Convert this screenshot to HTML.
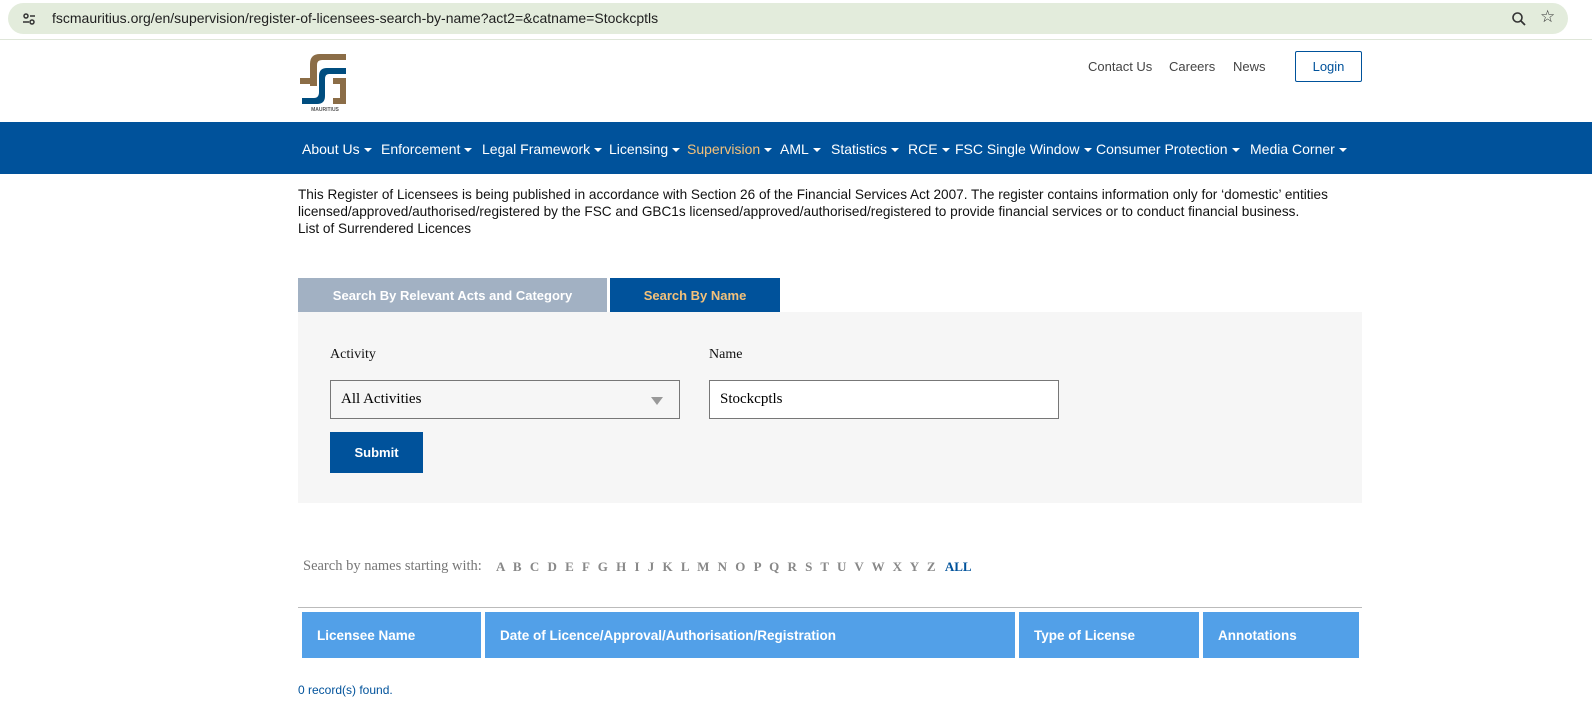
<!DOCTYPE html>
<html><head><meta charset="utf-8"><style>
*{margin:0;padding:0;box-sizing:border-box}
body{width:1592px;height:728px;overflow:hidden;background:#fff;font-family:"Liberation Sans",sans-serif;position:relative}
.a{position:absolute}
.bar{left:0;top:0;width:1592px;height:40px;background:#fff;border-bottom:1px solid #dfe6d9}
.url{left:8px;top:3px;width:1560px;height:31px;background:#e3ecdc;border-radius:16px}
.url span{position:absolute;left:44px;top:7px;font-size:14px;color:#1f1f1f}
.nav{left:0;top:122px;width:1592px;height:52px;background:#00529b}
.nav div{position:absolute;top:19px;color:#fff;font-size:14px;white-space:nowrap}
.tri{display:inline-block;border-left:4px solid transparent;border-right:4px solid transparent;border-top:4px solid #fff;margin-left:4px;vertical-align:2px}
.toplink{top:59px;font-size:13px;color:#444}
.p{left:298px;font-size:13.6px;color:#111;line-height:17px;white-space:nowrap}
.serif{font-family:"Liberation Serif",serif}
.th{top:612px;height:46px;background:#52a0e8;color:#fff;font-weight:bold;font-size:13.5px;padding:16px 0 0 15px}
</style></head><body>
<div class="a bar"></div>
<div class="a url"><span>fscmauritius.org/en/supervision/register-of-licensees-search-by-name?act2=&amp;catname=Stockcptls</span>
<svg class="a" style="left:14px;top:9px" width="14" height="14" viewBox="0 0 14 14"><circle cx="4" cy="4" r="2" fill="none" stroke="#333" stroke-width="1.5"/><line x1="8" y1="4" x2="13" y2="4" stroke="#333" stroke-width="1.5"/><line x1="1" y1="10" x2="7" y2="10" stroke="#333" stroke-width="1.5"/><circle cx="10" cy="10" r="2" fill="none" stroke="#333" stroke-width="1.5"/></svg>
<svg class="a" style="left:1503px;top:8px" width="16" height="16" viewBox="0 0 16 16"><circle cx="6.5" cy="6.5" r="4.5" fill="none" stroke="#333" stroke-width="1.6"/><line x1="10" y1="10" x2="14" y2="14" stroke="#333" stroke-width="1.8"/></svg>
<div class="a" style="left:1532px;top:4px;font-size:17px;color:#333">☆</div>
</div>
<svg class="a" style="left:300px;top:52px" width="50" height="60" viewBox="0 0 50 60">
<path d="M10 34 V12 Q10 2 20 2 H46 V8 H22 Q17 8 17 13 V34 Z M0 26 H17 V32 H0 Z" fill="#8b6d47"/>
<path d="M2 46 H14 Q19 46 19 40 V24 Q19 16 27 16 H46 V22 H29 Q25 22 25 27 V44 Q25 52 17 52 H2 Z" fill="#004d7f"/>
<path d="M33 26 H46 V52 H33 V46 H40 V32 H33 Z" fill="#8b6d47"/>
<text x="25" y="59" font-size="5" font-weight="bold" fill="#555" text-anchor="middle" font-family="Liberation Sans">MAURITIUS</text>
</svg>
<div class="a toplink" style="left:1088px">Contact Us</div>
<div class="a toplink" style="left:1169px">Careers</div>
<div class="a toplink" style="left:1233px">News</div>
<div class="a" style="left:1295px;top:51px;width:67px;height:31px;border:1px solid #00529b;border-radius:2px;color:#00529b;font-size:13px;text-align:center;line-height:29px">Login</div>
<div class="a nav">
<div style="left:302px">About Us<i class="tri"></i></div>
<div style="left:381px">Enforcement<i class="tri"></i></div>
<div style="left:482px">Legal Framework<i class="tri"></i></div>
<div style="left:609px">Licensing<i class="tri"></i></div>
<div style="left:687px;color:#f3c17a">Supervision<i class="tri"></i></div>
<div style="left:780px">AML<i class="tri"></i></div>
<div style="left:831px">Statistics<i class="tri"></i></div>
<div style="left:908px">RCE<i class="tri"></i></div>
<div style="left:955px">FSC Single Window<i class="tri"></i></div>
<div style="left:1096px">Consumer Protection<i class="tri"></i></div>
<div style="left:1250px">Media Corner<i class="tri"></i></div>
</div>
<div class="a p" style="top:186px">This Register of Licensees is being published in accordance with Section 26 of the Financial Services Act 2007. The register contains information only for ‘domestic’ entities<br>licensed/approved/authorised/registered by the FSC and GBC1s licensed/approved/authorised/registered to provide financial services or to conduct financial business.<br>List of Surrendered Licences</div>
<div class="a" style="left:298px;top:278px;width:309px;height:34px;background:#a2b1c3;color:#fff;font-weight:bold;font-size:13px;text-align:center;line-height:36px">Search By Relevant Acts and Category</div>
<div class="a" style="left:610px;top:278px;width:170px;height:34px;background:#00529b;color:#f3c17a;font-weight:bold;font-size:13px;text-align:center;line-height:36px">Search By Name</div>
<div class="a" style="left:298px;top:312px;width:1064px;height:191px;background:#f6f6f6"></div>
<div class="a serif" style="left:330px;top:347px;font-size:14px;color:#111">Activity</div>
<div class="a serif" style="left:709px;top:347px;font-size:14px;color:#111">Name</div>
<div class="a serif" style="left:330px;top:380px;width:350px;height:39px;border:1px solid #777;background:#f6f6f6;font-size:15px;padding:10px 0 0 10px">All Activities
<i style="position:absolute;right:16px;top:16px;border-left:6px solid transparent;border-right:6px solid transparent;border-top:8px solid #999"></i></div>
<div class="a serif" style="left:709px;top:380px;width:350px;height:39px;border:1px solid #777;background:#fff;font-size:15px;padding:10px 0 0 10px">Stockcptls</div>
<div class="a" style="left:330px;top:432px;width:93px;height:41px;background:#00529b;color:#fff;font-weight:bold;font-size:13px;text-align:center;line-height:41px">Submit</div>
<div class="a serif" style="left:303px;top:558px;font-size:14.5px;color:#777">Search by names starting with:</div>
<div class="a serif" style="left:496px;top:559px;font-size:13px;color:#888;font-weight:bold">
<span style="word-spacing:5px">A B C D E F G H I J K L M N O P Q R S T U V W X Y Z</span> <span style="color:#00529b;margin-left:6px">ALL</span></div>
<div class="a" style="left:298px;top:607px;width:1064px;height:1px;background:#bbb"></div>
<div class="a th" style="left:302px;width:179px">Licensee Name</div>
<div class="a th" style="left:485px;width:530px">Date of Licence/Approval/Authorisation/Registration</div>
<div class="a th" style="left:1019px;width:180px">Type of License</div>
<div class="a th" style="left:1203px;width:156px">Annotations</div>
<div class="a" style="left:298px;top:683px;font-size:12px;color:#00529b">0 record(s) found.</div>
</body></html>
